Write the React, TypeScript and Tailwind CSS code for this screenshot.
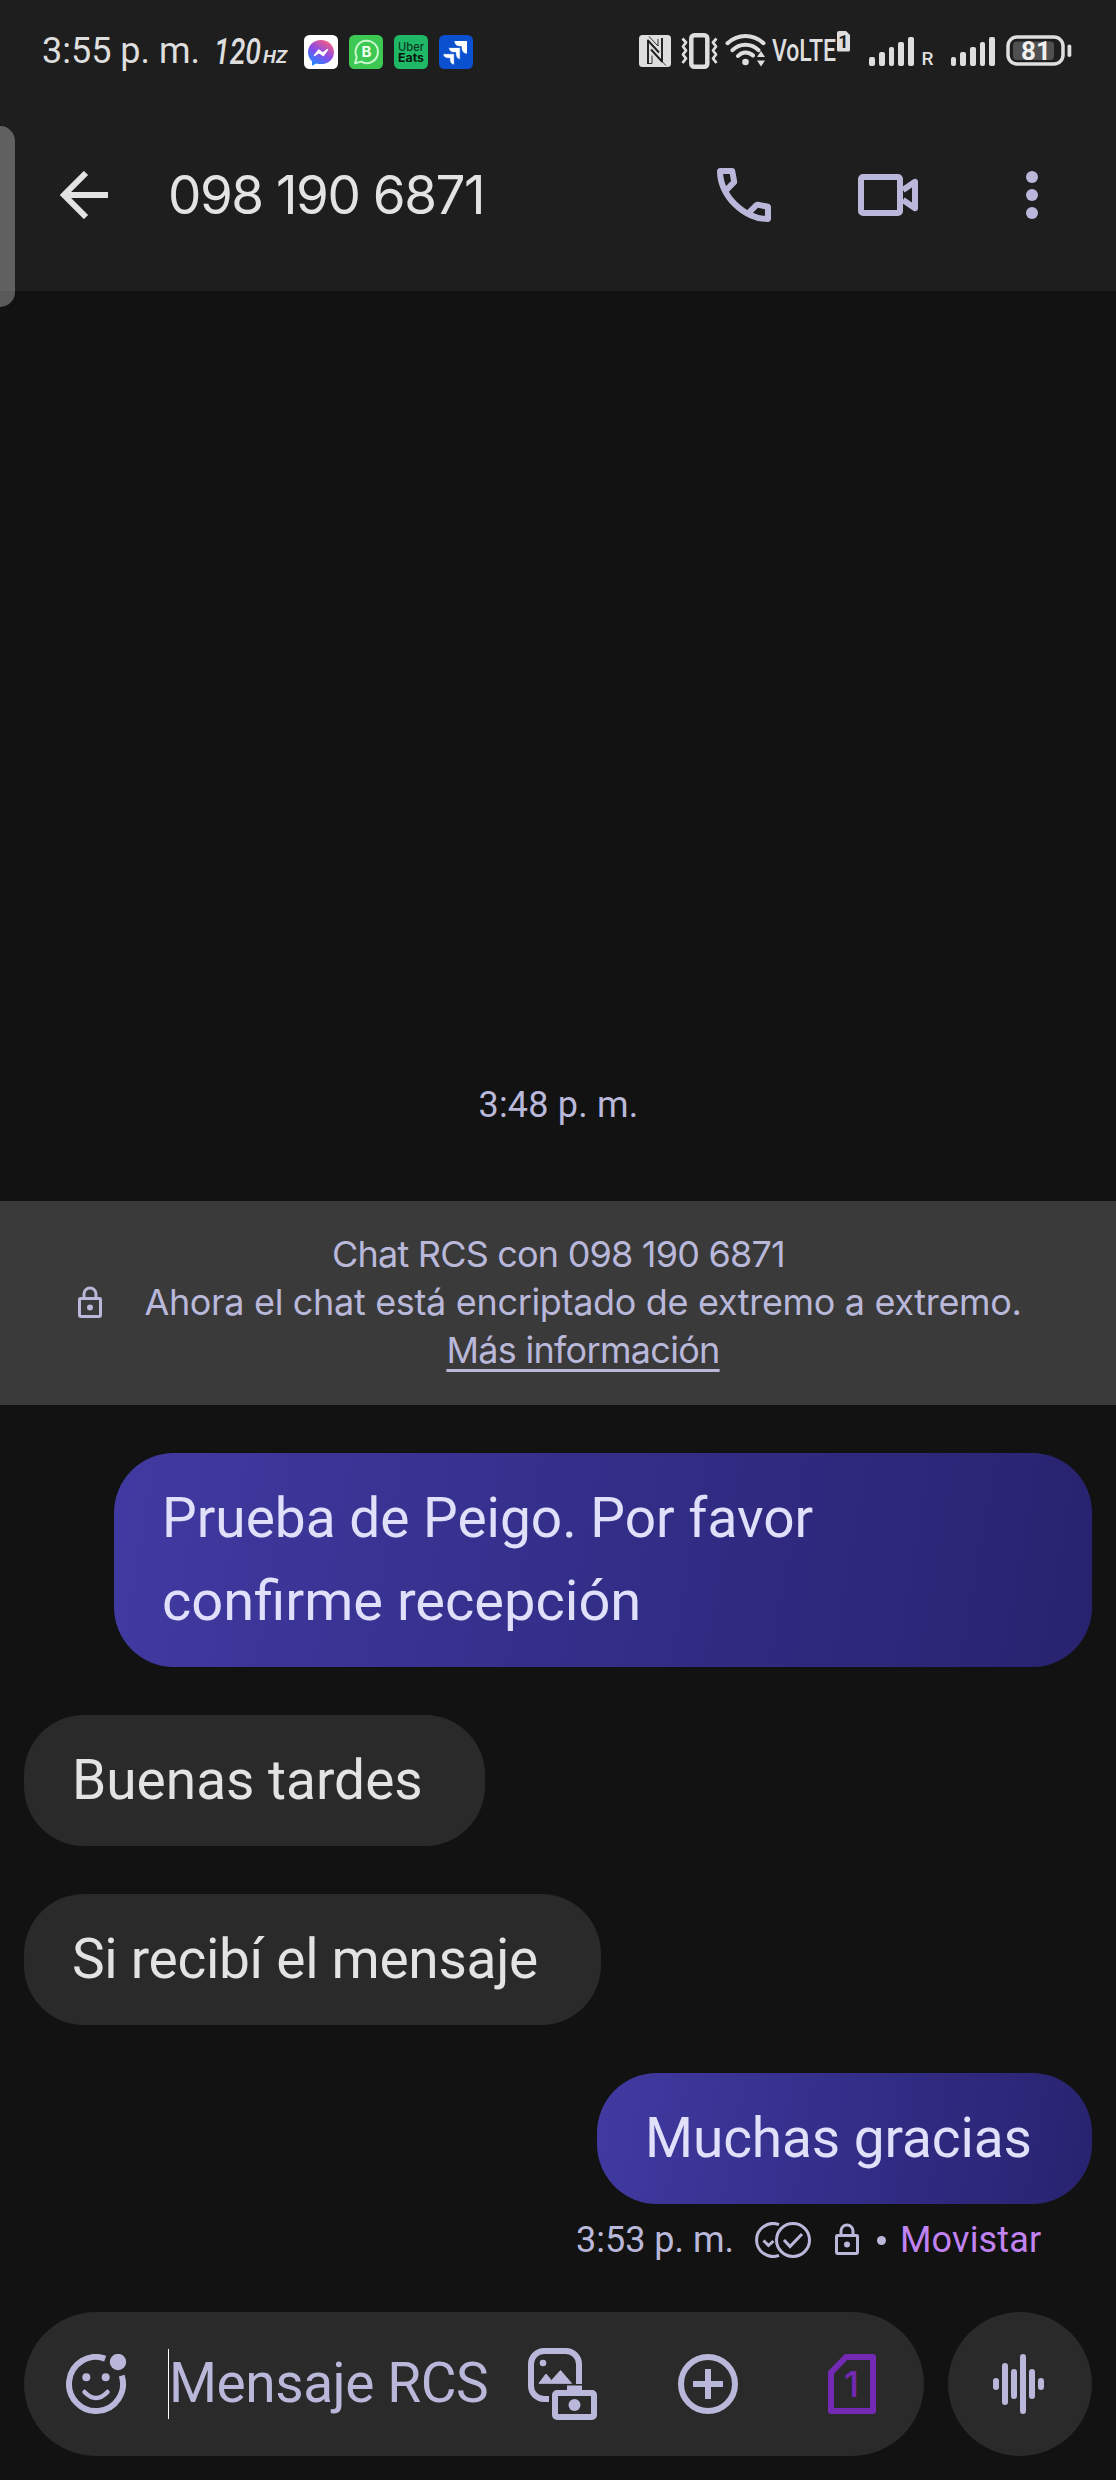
import React from "react";

const LAVENDER = "#b9b8da";
const STATUS = "#dedede";

function MessengerBadge() {
  return (
    <svg width="34" height="34" viewBox="0 0 34 34">
      <defs>
        <linearGradient id="msgr" x1="0.2" y1="1" x2="0.8" y2="0">
          <stop offset="0" stopColor="#1a8cff" />
          <stop offset="0.5" stopColor="#8a4be8" />
          <stop offset="1" stopColor="#ff5f7a" />
        </linearGradient>
      </defs>
      <rect width="34" height="34" rx="5.5" fill="#fff" />
      <path d="M17 5C9.500 5 4 10.300 4 17.200c0 3.600 1.500 6.800 4 9v4.600l4.300-2.400c1.500.4 3 .7 4.700.7 7.500 0 13-5.200 13-11.900S24.500 5 17 5Z" fill="url(#msgr)" />
      <path d="M10.500 20.500 14.800 15 18.800 18 23.500 14.500 19.300 20.500 15.200 17.600Z" fill="#fff" stroke="#fff" strokeWidth="1.400" strokeLinejoin="round" />
    </svg>
  );
}

function WhatsappBadge() {
  return (
    <svg width="34" height="34" viewBox="0 0 34 34">
      <rect width="34" height="34" rx="5.500" fill="#3cc853" />
      <path d="M6 28.200 7.800 22A11.200 11.200 0 1 1 12.200 26.600Z" fill="none" stroke="#c9f7ce" strokeWidth="2" strokeLinejoin="round" />
      <text x="17.400" y="22.400" textAnchor="middle" fontFamily="Inter, sans-serif" fontWeight="700" fontSize="15" fill="#f0fff0">B</text>
    </svg>
  );
}

function UberEatsBadge() {
  return (
    <svg width="34" height="34" viewBox="0 0 34 34">
      <rect width="34" height="34" rx="5.500" fill="#1fb866" />
      <text x="4" y="15.500" textLength="26" lengthAdjust="spacingAndGlyphs" fontFamily="Inter, sans-serif" fontWeight="500" fontSize="12" fill="#0c3a22">Uber</text>
      <text x="4" y="27" textLength="26" lengthAdjust="spacingAndGlyphs" fontFamily="Inter, sans-serif" fontWeight="700" fontSize="12" fill="#06180e">Eats</text>
    </svg>
  );
}

function JiraBadge() {
  return (
    <svg width="34" height="34" viewBox="0 0 34 34">
      <defs>
        <linearGradient id="jira" x1="0" y1="1" x2="1" y2="0">
          <stop offset="0" stopColor="#a9c6ff" />
          <stop offset="0.5" stopColor="#ffffff" />
        </linearGradient>
      </defs>
      <rect width="34" height="34" rx="5.500" fill="#0b50cf" />
      <g fill="url(#jira)">
        <path d="M15.500 6H28V18.500C24.800 18.500 22.800 16.200 22.800 13.200V11.200H20.700C17.700 11.200 15.500 9.200 15.500 6Z" />
        <path d="M9.700 12.500H21.200V24.500C18.400 24 16.700 22 16.700 19.200V17.500H14.600C11.700 17.500 9.700 15.500 9.700 12.500Z" stroke="#0b50cf" strokeWidth="0.800" />
        <path d="M4 18.700H15.300V30C12.500 29.500 10.800 27.800 10.800 25V23.300H8.800C6 23.300 4 21.500 4 18.700Z" stroke="#0b50cf" strokeWidth="0.800" />
      </g>
    </svg>
  );
}

function NfcIcon() {
  return (
    <svg width="32" height="32" viewBox="0 0 32 32" fill="none">
      <rect width="32" height="32" rx="3.500" fill={STATUS} />
      <path d="M9 29V5.500L20 17.500M23 3V26.500L12 14.500" stroke="#1e1e1e" strokeWidth="1.900" strokeLinejoin="round" />
      <path d="M10 1.500 19 11V4M13 20.500V28.500H9M23 26.500 27 30.500" stroke="#1e1e1e" strokeWidth="0.900" />
    </svg>
  );
}

function VibrateIcon() {
  return (
    <svg width="37" height="36" viewBox="0 0 37 36" fill="none" stroke={STATUS}>
      <rect x="10.300" y="2.300" width="16" height="31.400" rx="3" strokeWidth="4.500" />
      <path d="M1.500 5.500 5 9.500 2 13.500 5 17.500 2 21.500 5 25.500 1.500 30M35.500 5.500 32 9.500 35 13.500 32 17.500 35 21.500 32 25.500 35.500 30" strokeWidth="2.800" strokeLinejoin="round" />
    </svg>
  );
}

function WifiIcon() {
  return (
    <svg width="42" height="36" viewBox="0 0 42 36" fill="none" stroke={STATUS} strokeWidth="4" strokeLinecap="round">
      <path d="M2.500 10.200C13 .6 28 .6 38.500 10.200M7.500 17.200C14.500 10 26.500 10 33.500 17.200M13 23C17.300 18.300 23.700 18.300 28 22.500" />
      <circle cx="20.500" cy="29" r="3.300" fill={STATUS} stroke="none" />
      <path d="M36 18 40 24H32ZM36 33.500 40 27.500H32Z" fill={STATUS} stroke="none" />
    </svg>
  );
}

function VolteIcon() {
  return (
    <svg width="79" height="44" viewBox="0 -4 79 44">
      <text x="0" y="28" textLength="64" lengthAdjust="spacingAndGlyphs" fontFamily="Roboto, sans-serif" fontWeight="500" fontSize="31" fill={STATUS}>VoLTE</text>
      <path d="M65 0Q65-2 67-2H74L78 2V17Q78 18.500 76.500 18.500H66.500Q65 18.500 65 17Z" fill={STATUS} />
      <text x="71.300" y="15" textAnchor="middle" fontFamily="Roboto, sans-serif" fontWeight="700" fontSize="18" fill="#1e1e1e">1</text>
    </svg>
  );
}

function SignalBars() {
  return (
    <div className="flex h-[29px] items-end gap-[4px]">
      <div className="h-[9px] w-[5.700px] rounded-[2px] bg-[#dedede]" />
      <div className="h-[14px] w-[5.700px] rounded-[2px] bg-[#dedede]" />
      <div className="h-[19px] w-[5.700px] rounded-[2px] bg-[#dedede]" />
      <div className="h-[24px] w-[5.700px] rounded-[2px] bg-[#dedede]" />
      <div className="h-[29px] w-[5.700px] rounded-[2px] bg-[#dedede]" />
    </div>
  );
}

function BatteryIcon() {
  return (
    <svg width="66" height="32" viewBox="0 0 66 32">
      <rect x="2" y="2" width="55" height="27" rx="9" fill="none" stroke={STATUS} strokeWidth="3.500" />
      <rect x="7" y="6.500" width="41" height="18.500" rx="4" fill="#505050" />
      <rect x="61.500" y="9.500" width="3.800" height="12.500" rx="1.800" fill={STATUS} />
      <text x="30" y="24.500" textAnchor="middle" fontFamily="Roboto, sans-serif" fontWeight="700" fontSize="26" fill="#f0f0f0">81</text>
    </svg>
  );
}

function StatusBar() {
  return (
    <div className="flex h-[102px] shrink-0 items-center pl-[42px] pr-[44px]">
      <span className="w-[160px] whitespace-nowrap text-[36px] leading-[48px] text-[#dedede]">3:55 p. m.</span>
      <svg className="ml-[12px]" width="75" height="48" viewBox="0 -5 75 48" fontFamily="Roboto, sans-serif" fontStyle="italic" fill={STATUS}>
        <text x="0" y="32" textLength="47" lengthAdjust="spacingAndGlyphs" fontWeight="500" fontSize="37">120</text>
        <text x="49" y="30.500" textLength="24" lengthAdjust="spacingAndGlyphs" fontWeight="700" fontSize="18">HZ</text>
      </svg>
      <div className="ml-[15px] flex gap-[11px] pt-[2px]">
        <MessengerBadge />
        <WhatsappBadge />
        <UberEatsBadge />
        <JiraBadge />
      </div>
      <div className="ml-auto flex items-center">
        <NfcIcon />
        <div className="ml-[10px]"><VibrateIcon /></div>
        <div className="ml-[7px]"><WifiIcon /></div>
        <div className="ml-[5px]"><VolteIcon /></div>
        <div className="ml-[18px]"><SignalBars /></div>
        <span className="ml-[8px] w-[15px] pt-[14px] text-[19px] font-medium leading-none text-[#dedede]">R</span>
        <div className="ml-[14px]"><SignalBars /></div>
        <div className="ml-[11px]"><BatteryIcon /></div>
      </div>
    </div>
  );
}

function Header() {
  return (
    <div className="flex h-[189px] shrink-0 items-center pb-[3px] pl-[60px] pr-[48px]">
      <svg width="48" height="48" viewBox="0 0 48 48" fill="none" stroke="#e3e3e3" strokeWidth="6">
        <path d="M48 24H7M26 2 4 24 26 46" />
      </svg>
      <h1 className="ml-[60px] whitespace-nowrap font-['Inter'] text-[53px] leading-[64px] tracking-[-1.500px] text-[#e3e3e3]">098 190 6871</h1>
      <div className="ml-auto flex items-center gap-[72px]">
        <svg width="72" height="72" viewBox="0 0 24 24" fill={LAVENDER}>
          <path d="M19.950 21q-3.125 0-6.175-1.363T8.225 15.775Q5.725 13.275 4.363 10.225T3 4.050q0-.45.3-.75t.75-.3H8.100q.35 0 .625.238t.325.562l.65 3.500q.05.4-.025.675T9.400 8.450L6.975 10.900q.5.925 1.187 1.787T9.675 14.350q.775.775 1.625 1.438T13.100 17l2.350-2.350q.225-.225.588-.337t.712-.063l3.450.7q.35.1.575.363T21 15.900v4.050q0 .45-.3.750T19.950 21ZM6.025 9l1.650-1.650L7.250 5H5.025q.125 1.025.35 2.025T6.025 9Zm8.950 8.950q.975.425 1.988.675T19 18.950v-2.200l-2.350-.475L14.975 17.950Z" />
        </svg>
        <svg width="72" height="72" viewBox="0 0 24 24" fill="none" stroke={LAVENDER} strokeWidth="2" strokeLinejoin="round">
          <rect x="3" y="6" width="13" height="12" rx="0.700" />
          <path d="M17 10.300 21 7.600V16.400L17 13.700" />
        </svg>
        <svg width="72" height="72" viewBox="0 0 24 24" fill={LAVENDER}>
          <circle cx="12" cy="6" r="2" />
          <circle cx="12" cy="12" r="2" />
          <circle cx="12" cy="18" r="2" />
        </svg>
      </div>
    </div>
  );
}

function LockIcon() {
  return (
    <svg className="shrink-0" width="36" height="36" viewBox="0 0 24 24" fill="none" stroke={LAVENDER} strokeWidth="2">
      <rect x="5" y="9" width="14" height="12" rx="0.600" />
      <path d="M8 9V6a4 4 0 0 1 8 0V9" />
      <circle cx="12" cy="15" r="2" fill={LAVENDER} stroke="none" />
    </svg>
  );
}

function EncryptionBanner() {
  return (
    <div className="mt-[72px] h-[204px] bg-[#3a3a3a] pt-[29px] text-center font-['Inter'] text-[36px] leading-[48px] text-[#b9b8da]">
      <p className="pl-[1px] tracking-[-0.800px]">Chat RCS con 098 190 6871</p>
      <div className="flex pl-[72px]">
        <div className="pt-[7px]"><LockIcon /></div>
        <div className="ml-[36px] w-[878px] whitespace-nowrap">
          <p className="tracking-[-0.330px]">Ahora el chat está encriptado de extremo a extremo.</p>
          <p className="tracking-[-0.700px]">
            <span className="underline decoration-[3px] underline-offset-[6px] [text-decoration-skip-ink:none]">Más información</span>
          </p>
        </div>
      </div>
    </div>
  );
}

function Bubble({ out, className, children }: { out?: boolean; className: string; children: React.ReactNode }) {
  return (
    <div
      className={
        (out
          ? "self-end bg-[linear-gradient(100deg,#413aa2,#332e88_50%,#28236f)] text-[#e0e0fa] "
          : "self-start bg-[#2a2a2a] text-[#e3e3e3] ") +
        "whitespace-nowrap rounded-[60px] py-[24px] pl-[48px] text-[55px] leading-[83px] " +
        className
      }
    >
      {children}
    </div>
  );
}

function ReadReceipt() {
  return (
    <svg width="57" height="36" viewBox="0 0 57 36" fill="none" stroke={LAVENDER} strokeWidth="3">
      <path d="M25 2.600A16.500 16.500 0 1 0 25 33.400" />
      <circle cx="39" cy="18" r="16.500" />
      <path d="M30 18 36 24.500 48 12M9.500 18.500 14.500 23.500 19.500 19" />
    </svg>
  );
}

function Composer() {
  return (
    <div className="mt-auto flex shrink-0 gap-[24px] px-[24px] pb-[24px]">
      <div className="flex h-[144px] w-[900px] items-center rounded-full bg-[#2a2a2a] pl-[42px]">
        <svg width="62" height="60" viewBox="0 0 62 60" fill="none" stroke={LAVENDER}>
          <path d="M55.700 21.700A27 27 0 1 1 39.200 4.600" strokeWidth="6" />
          <circle cx="52" cy="8" r="8.200" fill={LAVENDER} stroke="none" />
          <circle cx="20.300" cy="23.300" r="4" fill={LAVENDER} stroke="none" />
          <circle cx="39.700" cy="23.300" r="4" fill={LAVENDER} stroke="none" />
          <path d="M18.500 38Q30 50 41.500 38" strokeWidth="4.500" strokeLinecap="round" />
        </svg>
        <div className="ml-[40px] h-[70px] w-px bg-white" />
        <span className="w-[359px] whitespace-nowrap pb-[2px] text-[55px] leading-[72px] tracking-[-0.450px] text-[#b9b8da]">Mensaje RCS</span>
        <svg width="70" height="72" viewBox="0 0 70 72" fill="none" stroke={LAVENDER} strokeWidth="6">
          <path d="M51 36V16A13 13 0 0 0 38 3H16A13 13 0 0 0 3 16V38A13 13 0 0 0 16 51H21" />
          <circle cx="15" cy="15" r="3.300" fill={LAVENDER} stroke="none" />
          <path d="M11 35.300 18 26 23.500 32.500 32.500 22.500 43.500 35.300Z" fill={LAVENDER} stroke={LAVENDER} strokeWidth="1" strokeLinejoin="round" />
          <rect x="27" y="45" width="39" height="24" rx="2" />
          <path d="M39 40.500H54" />
          <circle cx="46.500" cy="57" r="6" fill={LAVENDER} stroke="none" />
        </svg>
        <svg className="ml-[80px]" width="60" height="60" viewBox="0 0 60 60" fill="none" stroke={LAVENDER} strokeWidth="6">
          <circle cx="30" cy="30" r="27" />
          <path d="M30 15V45M15 30H45" />
        </svg>
        <svg className="ml-[90px]" width="48" height="60" viewBox="0 0 48 60">
          <path d="M18 3H45V57H3V18.500Z" fill="none" stroke="#7429b4" strokeWidth="6" strokeLinejoin="round" />
          <text x="23.500" y="42.500" textAnchor="middle" fontFamily="Inter, sans-serif" fontWeight="500" fontSize="36" fill="#7429b4">1</text>
        </svg>
      </div>
      <div className="flex h-[144px] w-[144px] items-center justify-center rounded-full bg-[#2a2a2a]">
        <svg width="72" height="72" viewBox="0 0 24 24" stroke={LAVENDER} strokeWidth="2" strokeLinecap="round">
          <path d="M4 11V13M7 6V18M10 8V16M13 3V21M16 8V16M19 11V13" />
        </svg>
      </div>
    </div>
  );
}

export default function App() {
  return (
    <div className="relative flex h-[2480px] w-[1116px] flex-col overflow-hidden bg-[#121212] font-['Roboto',sans-serif]">
      <div className="bg-[#1e1e1e]">
        <StatusBar />
        <Header />
      </div>
      <div className="absolute left-0 top-[126px] h-[181px] w-[15px] rounded-r-[18px] bg-white/30" />

      <p className="mt-[790px] pl-[1px] text-center text-[36px] leading-[48px] tracking-[0.200px] text-[#b9b8da]">3:48 p. m.</p>
      <EncryptionBanner />

      <div className="mt-[48px] flex flex-col gap-[48px] px-[24px]">
        <Bubble out className="w-[978px]">
          <p>Prueba de Peigo. Por favor</p>
          <p className="text-[56px]">confirme recepción</p>
        </Bubble>
        <Bubble className="w-[461px]">Buenas tardes</Bubble>
        <Bubble className="w-[577px] tracking-[-0.300px]">Si recibí el mensaje</Bubble>
        <Bubble out className="w-[495px] tracking-[-0.100px]">Muchas gracias</Bubble>
      </div>

      <div className="mt-[12px] flex items-center pl-[576px] text-[36px] leading-[48px] text-[#b9b8da]">
        <span className="w-[178px] whitespace-nowrap">3:53 p. m.</span>
        <ReadReceipt />
        <div className="ml-[18px]"><LockIcon /></div>
        <div className="ml-[12px] size-[9px] rounded-full bg-[#b9b8da]" />
        <span className="ml-[14px] tracking-[0.170px] text-[#c183f2]">Movistar</span>
      </div>

      <Composer />
    </div>
  );
}
